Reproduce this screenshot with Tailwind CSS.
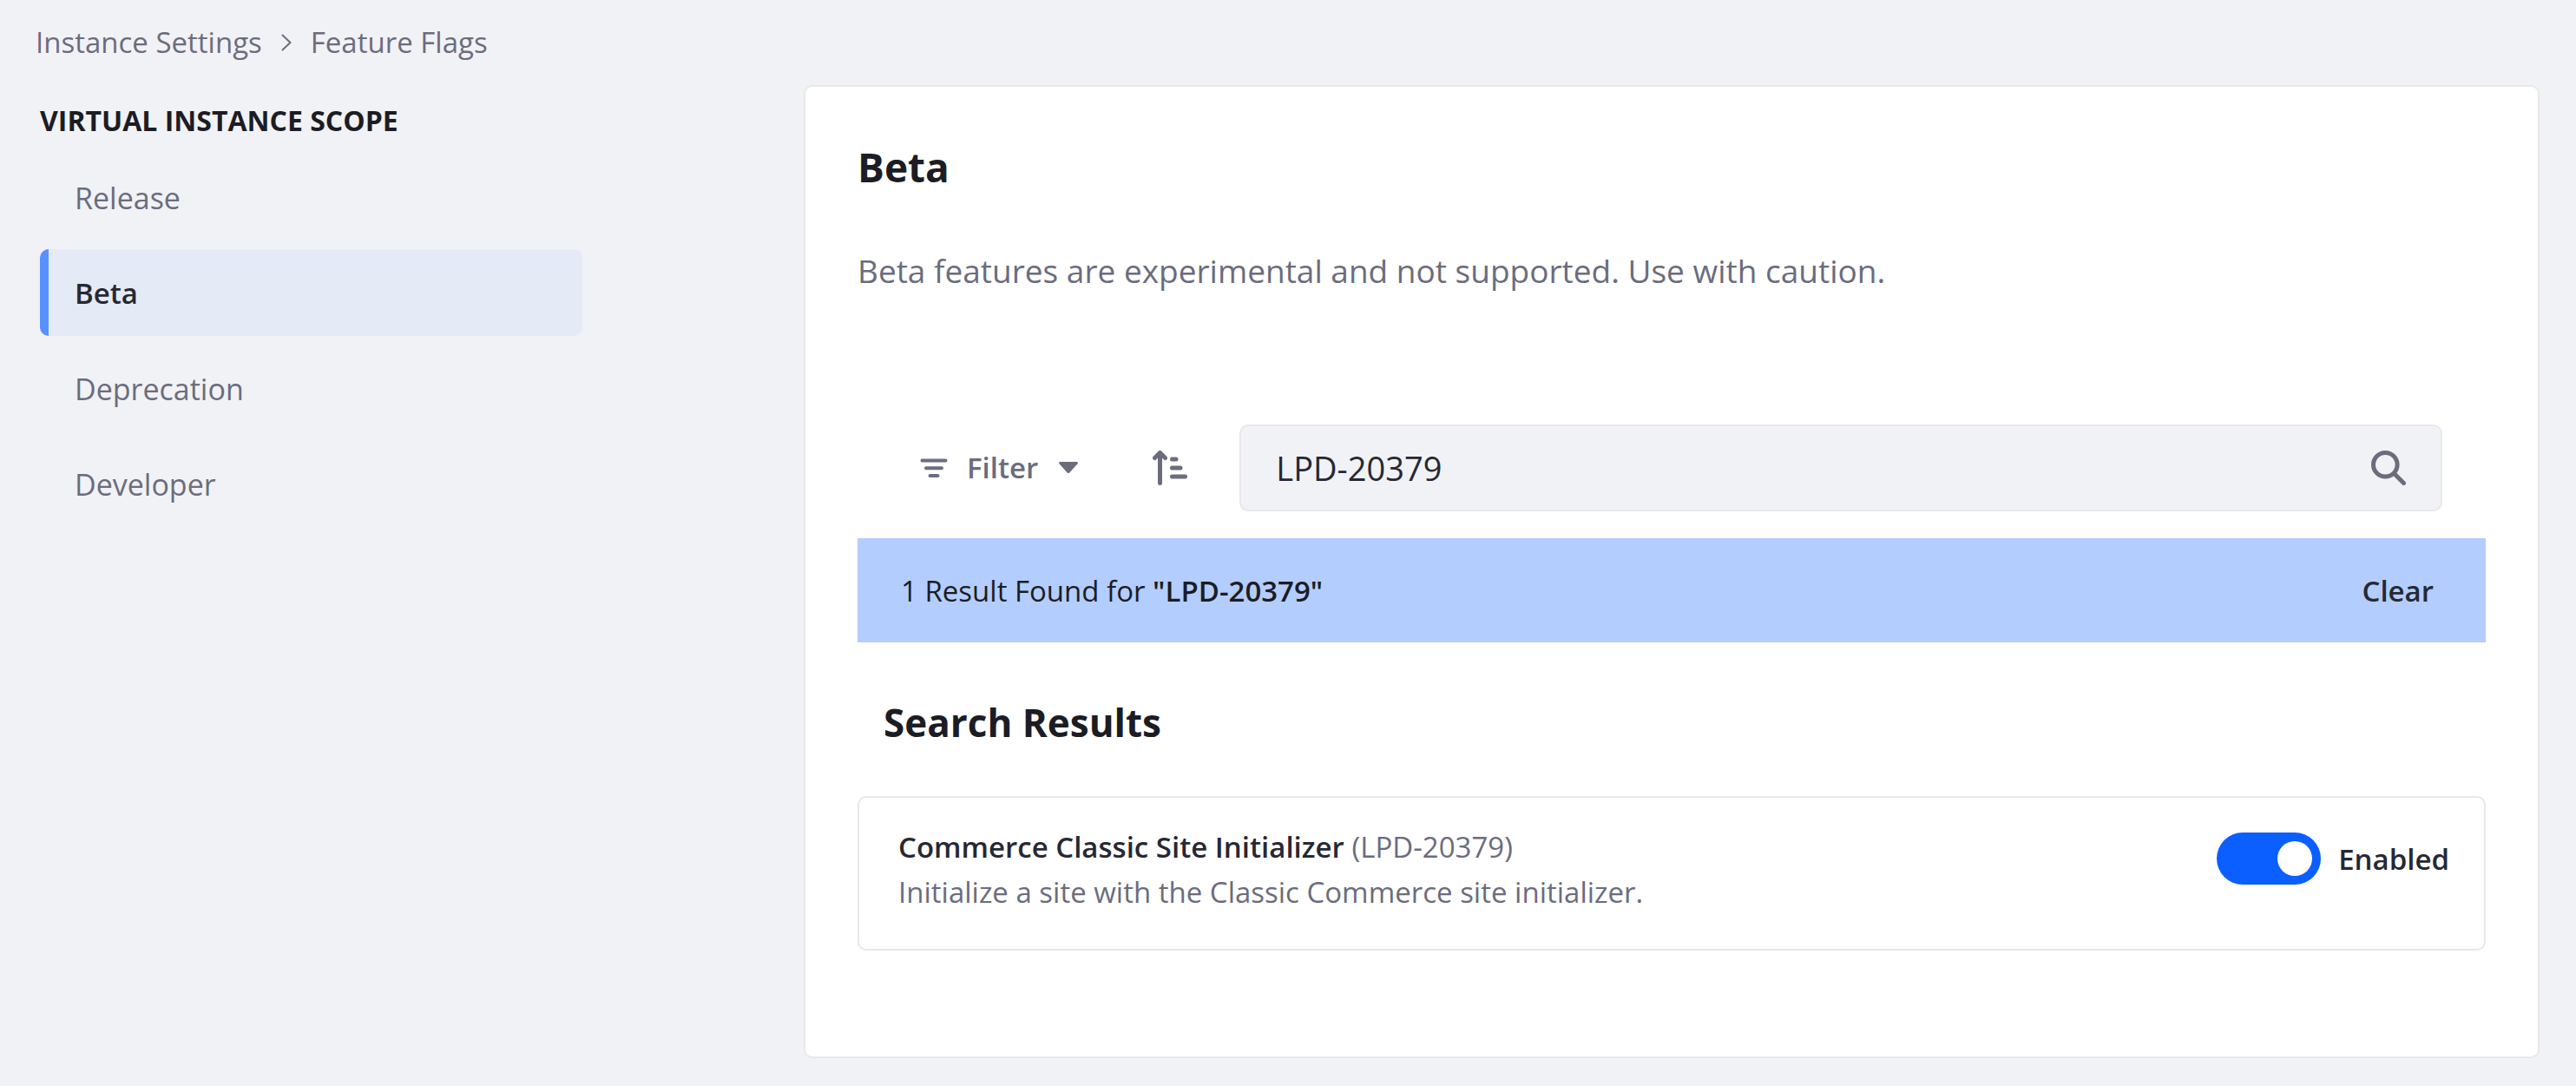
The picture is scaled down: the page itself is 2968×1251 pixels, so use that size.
<!DOCTYPE html>
<html lang="en">
<head>
<meta charset="utf-8">
<meta name="viewport" content="width=device-width, initial-scale=1">
<title>Feature Flags</title>
<script src="https://cdn.jsdelivr.net/npm/@tailwindcss/browser@4"></script>
</head>
<body class="min-h-screen bg-[#f1f2f5] font-['Open_Sans','Noto_Sans',sans-serif] text-[33px] leading-[52px] text-[#6b6c7e]">
  <nav aria-label="Breadcrumb" class="px-[41px] pt-[23px]">
    <ol class="flex items-center">
      <li><a href="#">Instance Settings</a></li>
      <li aria-hidden="true" class="px-[22px]">
        <svg class="h-[20px] w-[12px]" viewBox="0 0 12 20" fill="none" stroke="currentColor" stroke-width="2" stroke-linecap="round" stroke-linejoin="round"><path d="M1.500 1.500 10.500 10l-9 8.500"/></svg>
      </li>
      <li><a href="#" aria-current="page">Feature Flags</a></li>
    </ol>
  </nav>

  <div class="grid grid-cols-[5fr_16fr] items-start gap-[255px] pt-[23px] pr-[42px] pb-8 pl-[46px]">
    <aside class="pt-[15px]">
      <h2 class="text-[32px] font-bold whitespace-nowrap text-[#1c1c24]">VIRTUAL INSTANCE SCOPE</h2>
      <ul class="flex flex-col gap-[10px] pt-[12px] text-[34px]">
        <li><a href="#" class="block rounded-[10px] border-l-[10px] border-transparent px-[30px] pt-[25px] pb-[23px]">Release</a></li>
        <li><a href="#" aria-current="true" class="block rounded-[10px] border-l-[10px] border-[#5791ff] bg-[#e4eaf6] px-[30px] pt-[25px] pb-[23px] text-[33px] font-semibold text-[#272833]">Beta</a></li>
        <li><a href="#" class="block rounded-[10px] border-l-[10px] border-transparent px-[30px] pt-[25px] pb-[23px]">Deprecation</a></li>
        <li><a href="#" class="block rounded-[10px] border-l-[10px] border-transparent px-[30px] pt-[25px] pb-[23px]">Developer</a></li>
      </ul>
    </aside>

    <main class="rounded-[10px] border-2 border-[#e7e7ed] bg-white px-[60px] pt-[60px] pb-[122px]">
      <h1 class="text-[46px] leading-[64px] font-bold text-[#1c1c24]">Beta</h1>
      <p class="pt-[58px] text-[37px] leading-[60px]">Beta features are experimental and not supported. Use with caution.</p>

      <form class="flex items-center pt-[147px] pr-[50px] pl-[72px]">
        <button type="button" class="flex items-center font-semibold">
          <svg class="h-[24px] w-[32px]" viewBox="0 0 32 24" fill="none" stroke="currentColor" stroke-width="4" stroke-linecap="round"><path d="M2.500 3.500h27M7 12.300h18M11.500 21h9"/></svg>
          <span class="pl-[22px]">Filter</span>
          <svg class="ml-[24px] h-[14px] w-[22px]" viewBox="0 0 22 14" fill="currentColor"><path d="M1.500 0h19c1.300 0 1.800 1.300 1 2.300L12.300 12.500c-.8.800-1.800.8-2.600 0L.5 2.300C-.3 1.300.2 0 1.500 0Z"/></svg>
        </button>
        <button type="button" aria-label="Reverse order" class="ml-[86px]">
          <svg class="h-[40px] w-[40px]" viewBox="0 0 40 40" fill="none" stroke="currentColor" stroke-width="5" stroke-linecap="round" stroke-linejoin="round"><path d="M8.500 3v34.500"/><path d="M2.500 8.500l6-6 6 6"/><path d="M22.500 10h4.500M22.500 20h9.500M22.500 30h15"/></svg>
        </button>
        <div class="ml-[60px] flex h-[100px] min-w-0 flex-1 items-center rounded-[10px] border-2 border-[#e7e7ed] bg-[#f1f2f5] px-[40px]">
          <input type="text" aria-label="Search" value="LPD-20379" class="min-w-0 flex-1 bg-transparent text-[38px] leading-[60px] text-[#272833] outline-none">
          <button type="submit" aria-label="Search">
            <svg class="h-[40px] w-[40px]" viewBox="0 0 40 40" fill="none" stroke="currentColor" stroke-width="5" stroke-linecap="round"><circle cx="16.300" cy="16.300" r="13.800"/><path d="M27 27l10.500 10.500"/></svg>
          </button>
        </div>
      </form>

      <div class="mt-[31px] flex h-[120px] items-center justify-between bg-[#b3cdff] pt-[2px] pr-[60px] pl-[50px] text-[#1c1c24]">
        <p>1 Result Found for <strong class="font-semibold">"LPD-20379"</strong></p>
        <button type="button" class="font-semibold text-[#272833]">Clear</button>
      </div>

      <h2 class="pt-[60px] pl-[30px] text-[44px] leading-[64px] font-bold text-[#1c1c24]">Search Results</h2>

      <section class="mt-[53px] flex items-start justify-between rounded-[10px] border-2 border-[#e7e7ed] pt-[31px] pr-[40px] pb-[39px] pl-[45px]">
        <div>
          <p><span class="font-semibold text-[#272833]">Commerce Classic Site Initializer</span> (LPD-20379)</p>
          <p>Initialize a site with the Classic Commerce site initializer.</p>
        </div>
        <label class="flex items-center gap-[20px] pt-[9px] font-semibold text-[#272833]">
          <input type="checkbox" role="switch" checked class="h-[60px] w-[120px] appearance-none rounded-full bg-[#cdced9] p-[10px] before:block before:size-[40px] before:rounded-full before:bg-white checked:bg-[#0b5fff] checked:before:ml-auto">
          <span class="pt-[2px]">Enabled</span>
        </label>
      </section>
    </main>
  </div>
</body>
</html>
